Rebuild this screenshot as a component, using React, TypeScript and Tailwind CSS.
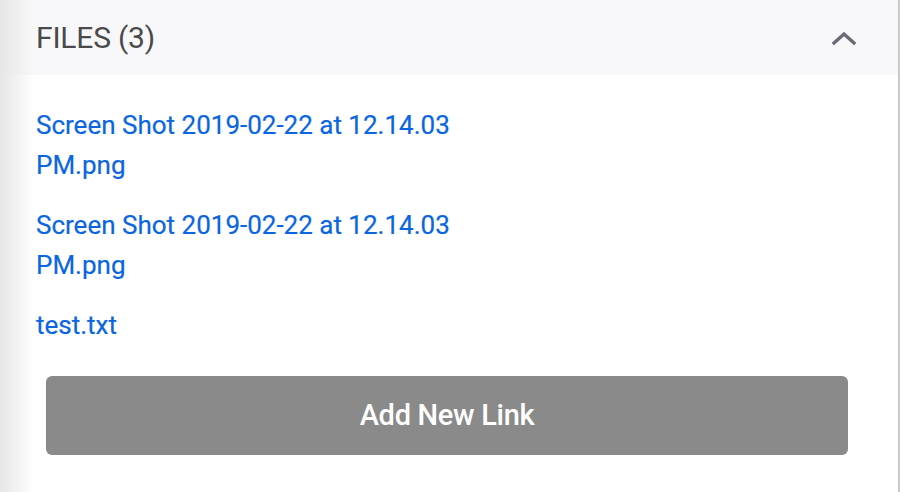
import React from 'react';

const files = [
  'Screen Shot 2019-02-22 at 12.14.03 PM.png',
  'Screen Shot 2019-02-22 at 12.14.03 PM.png',
  'test.txt',
];

export default function App() {
  return (
    <div className="relative h-[492px] w-[900px] overflow-hidden bg-white font-['Roboto',sans-serif]">
      {/* left shadow */}
      <div className="pointer-events-none absolute inset-y-0 left-0 w-[34px] bg-gradient-to-r from-[#e6e6e6] to-transparent" />
      <div className="flex h-full flex-col border-r-2 border-[#c9c9c9]">
        <div className="flex h-[75px] items-center justify-between bg-[#f8f8fa] pl-9 pr-[42px]">
          <h3 className="text-[30px] leading-none tracking-[-0.2px] text-[#4a4a4a]">FILES (3)</h3>
          <svg width="24" height="14" viewBox="0 0 24 14" fill="none">
            <path d="M2 12 L12 3 L22 12" stroke="#6b6b78" strokeWidth="3.4" strokeLinecap="square" />
          </svg>
        </div>
        <div className="flex flex-col gap-5 pl-9 pt-[30px]">
          {files.map((f, i) => (
            <a key={i} href="#" className="w-[460px] text-[26px] leading-[40px] text-[#0a66e0] [-webkit-text-stroke:0.2px_#0a66e0]">
              {f}
            </a>
          ))}
        </div>
        <div className="px-[46px] pt-[31px] pr-[50px]">
          <button className="h-[79px] w-full rounded-md bg-[#8a8a8a] text-[29px] font-medium tracking-[-0.3px] text-white">
            Add New Link
          </button>
        </div>
      </div>
    </div>
  );
}
